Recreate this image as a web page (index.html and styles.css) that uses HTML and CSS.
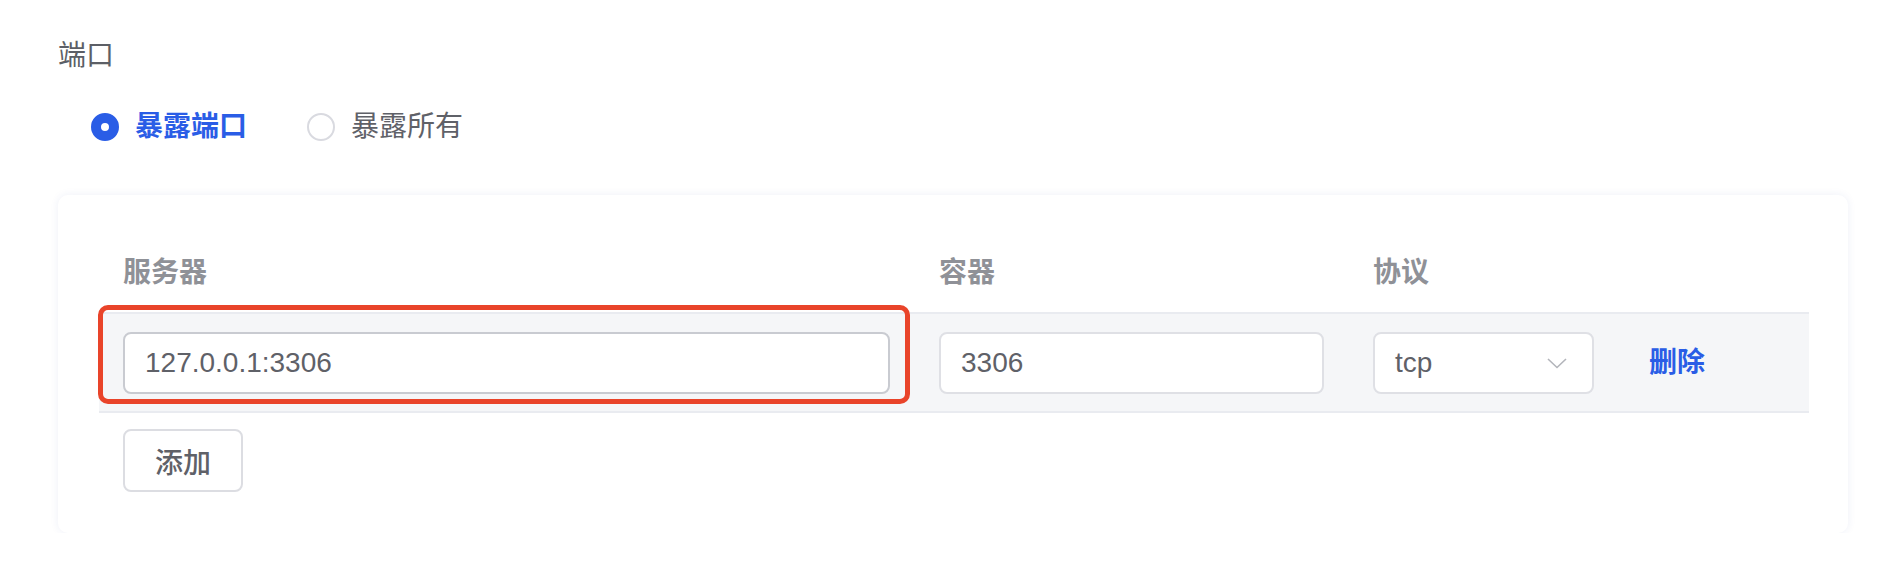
FILE: index.html
```html
<!DOCTYPE html>
<html lang="zh-CN">
<head>
<meta charset="utf-8">
<title>端口</title>
<link rel="stylesheet" href="styles.css">
</head>
<body>
<div class="page">
  <div class="field-label">端口</div>
  <div class="radio-group">
    <label class="radio checked"><span class="radio-dot"></span><span class="radio-text">暴露端口</span></label>
    <label class="radio"><span class="radio-dot"></span><span class="radio-text">暴露所有</span></label>
  </div>
  <div class="card">
    <div class="grid head">
      <div>服务器</div>
      <div>容器</div>
      <div>协议</div>
      <div></div>
    </div>
    <div class="grid row">
      <div class="input strong">127.0.0.1:3306</div>
      <div class="input">3306</div>
      <div class="input select"><span>tcp</span><svg class="chev" width="20" height="11" viewBox="0 0 20 11"><polyline points="1,1 10,9.5 19,1" fill="none" stroke="#b3b5bb" stroke-width="1.6"/></svg></div>
      <a class="link">删除</a>
      <div class="highlight"></div>
    </div>
    <button class="btn">添加</button>
  </div>
</div>
</body>
</html>
```

FILE: styles.css
```css
html, body {
  margin: 0;
  background: #ffffff;
}
body {
  font-family: "Liberation Sans", "Noto Sans CJK SC", sans-serif;
  color: #5f6168;
}
.page {
  padding: 36px 42px 0 58px;
}
.field-label {
  font-size: 28px;
  line-height: 40px;
  color: #5c5f66;
}
.radio-group {
  display: flex;
  align-items: center;
  margin-top: 31px;
  padding-left: 33px;
  height: 40px;
}
.radio {
  display: flex;
  align-items: center;
  gap: 16px;
  margin-right: 60px;
  font-size: 28px;
  line-height: 40px;
  color: #5f6168;
}
.radio-dot {
  width: 28px;
  height: 28px;
  box-sizing: border-box;
  border-radius: 50%;
  border: 2px solid #d9dae0;
  background: #fff;
}
.radio.checked {
  color: #2a5de6;
  font-weight: 600;
}
.radio.checked .radio-dot {
  border: 10px solid #2a5de6;
}
.card {
  margin-top: 48px;
  width: 1790px;
  box-sizing: border-box;
  border-radius: 10px;
  background: #fff;
  box-shadow: 0 0 8px rgba(40, 60, 160, 0.08);
  padding: 58px 39px 41px 41px;
}
.grid {
  display: grid;
  grid-template-columns: 767px 385px 221px auto;
  column-gap: 49px;
  padding-left: 24px;
  align-items: center;
}
.head {
  font-size: 28px;
  line-height: 40px;
  font-weight: 600;
  color: #8f9197;
  padding-bottom: 19px;
}
.row {
  position: relative;
  background: #f5f6f8;
  border-top: 2px solid #e9ebf0;
  border-bottom: 2px solid #e9ebf0;
  padding-top: 18px;
  padding-bottom: 17px;
}
.input {
  height: 62px;
  box-sizing: border-box;
  border: 2px solid #dfe0e5;
  border-radius: 8px;
  background: #fff;
  padding: 0 20px;
  display: flex;
  align-items: center;
  font-size: 28px;
  color: #5f6168;
}
.input.strong {
  border-color: #c9cbd1;
}
.select {
  justify-content: space-between;
  padding-right: 25px;
}
.chev {
  display: block;
}
.link {
  color: #2a5de6;
  font-weight: 600;
  font-size: 28px;
  line-height: 40px;
  margin-left: 6px;
  cursor: pointer;
}
.highlight {
  position: absolute;
  left: -1px;
  top: -9px;
  width: 812px;
  height: 99px;
  box-sizing: border-box;
  border: 5px solid #e9442a;
  border-radius: 10px;
  pointer-events: none;
}
.btn {
  display: block;
  margin-top: 16px;
  margin-left: 24px;
  width: 120px;
  height: 63px;
  box-sizing: border-box;
  border: 2px solid #dcdde2;
  border-radius: 8px;
  background: #fff;
  font-family: "Liberation Sans", "Noto Sans CJK SC", sans-serif;
  font-size: 28px;
  font-weight: 500;
  color: #5f6168;
  padding: 0;
}
```
